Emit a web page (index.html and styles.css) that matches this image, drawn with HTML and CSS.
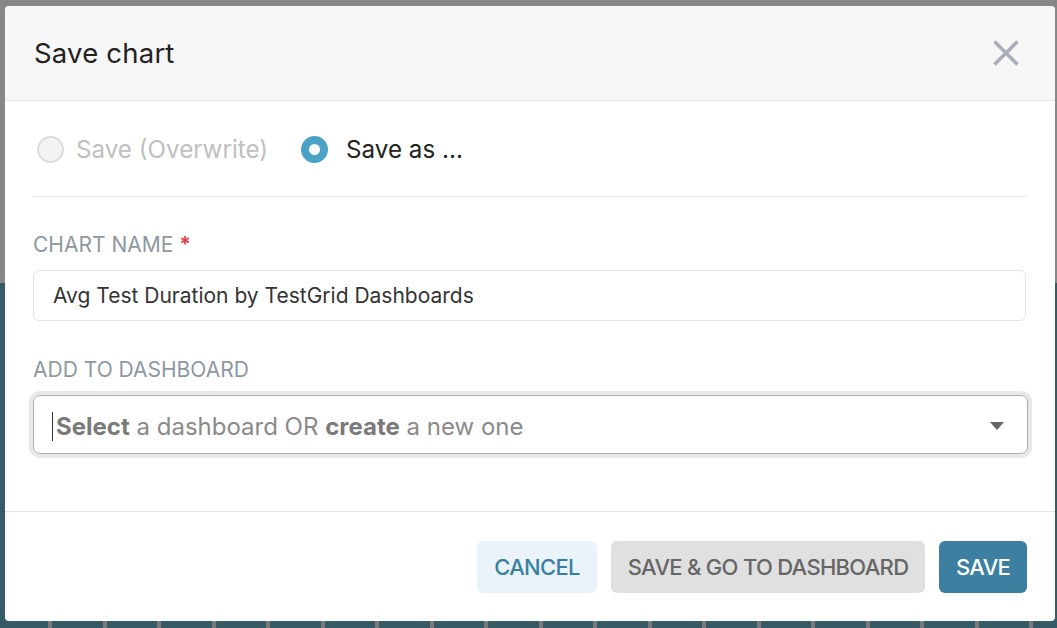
FILE: index.html
```html
<!DOCTYPE html>
<html>
<head>
<meta charset="utf-8">
<title>Save chart</title>
<link rel="stylesheet" href="styles.css">
</head>
<body>
<div class="page">
  <div class="page-top"></div>
  <div class="page-bottom"></div>
</div>
<div class="modal">
  <div class="modal-header">
    <h2 class="modal-title">Save chart</h2>
    <button class="close" aria-label="Close">
      <svg width="26" height="26" viewBox="0 0 26 26"><path d="M1.5 1.5 L24.5 24.5 M24.5 1.5 L1.5 24.5" stroke="#acadbc" stroke-width="3.6" fill="none"/></svg>
    </button>
  </div>
  <div class="modal-body">
    <div class="radio-row">
      <label class="radio disabled"><span class="dot"></span><span class="radio-text">Save (Overwrite)</span></label>
      <label class="radio checked"><span class="dot"></span><span class="radio-text">Save as ...</span></label>
    </div>
    <div class="divider"></div>
    <div class="field">
      <div class="field-label">CHART NAME <span class="req">*</span></div>
      <div class="input">Avg Test Duration by TestGrid Dashboards</div>
    </div>
    <div class="field field-2">
      <div class="field-label">ADD TO DASHBOARD</div>
      <div class="select">
        <span class="caret"></span>
        <span class="placeholder"><b>Select</b> a dashboard OR <b>create</b> a new one</span>
        <span class="arrow"></span>
      </div>
    </div>
  </div>
  <div class="modal-footer">
    <button class="btn btn-cancel">CANCEL</button>
    <button class="btn btn-secondary">SAVE &amp; GO TO DASHBOARD</button>
    <button class="btn btn-primary">SAVE</button>
  </div>
</div>
</body>
</html>
```
FILE: styles.css
```css
html, body {
  margin: 0;
  padding: 0;
  width: 1057px;
  height: 628px;
  overflow: hidden;
  font-family: Inter, "Noto Sans", sans-serif;
}

.page {
  display: flex;
  flex-direction: column;
  height: 628px;
  background: #878787;
}
.page-top {
  height: 283px;
  background: #878787;
}
.page-bottom {
  flex: 1;
  background-color: #365b67;
  background-image: repeating-linear-gradient(90deg, transparent 0 48px, #7a7a7a 48px 52px, transparent 52px 54.5px);
  background-size: 100% 7px;
  background-position: 0 100%;
  background-repeat: no-repeat;
}

.modal {
  position: absolute;
  left: 5px;
  top: 6px;
  width: 1050px;
  height: 615px;
  background: #fff;
  border-radius: 4px;
  display: flex;
  flex-direction: column;
  overflow: hidden;
}

.modal-header {
  height: 95px;
  box-sizing: border-box;
  background: #f7f7f7;
  border-bottom: 1px solid #e8e8e8;
  display: flex;
  align-items: center;
  justify-content: space-between;
  padding: 0 36px 0 29px;
}
.modal-title {
  margin: 0;
  font-size: 27.5px;
  font-weight: 400;
  color: #222;
  letter-spacing: 0.2px;
}
.close {
  border: 0;
  background: none;
  padding: 0;
  width: 26px;
  height: 26px;
  display: flex;
}

.modal-body {
  padding: 24px 29px 0 28px;
  flex: 1;
}

.radio-row {
  height: 48px;
  display: flex;
  align-items: center;
}
.radio {
  display: flex;
  align-items: center;
  font-size: 24.2px;
}
.radio .dot {
  width: 27px;
  height: 27px;
  border-radius: 50%;
  box-sizing: border-box;
  display: inline-block;
}
.radio.disabled {
  margin-left: 4px;
  color: #bfbfbf;
}
.radio.disabled .dot {
  border: 2px solid #dcdcdc;
  background: #f3f3f3;
  margin-right: 12px;
}
.radio.checked {
  margin-left: 33px;
  color: #222;
}
.radio.checked .dot {
  border: 8.5px solid #4aa3c7;
  background: #fff;
  margin-right: 18px;
}

.divider {
  height: 1px;
  background: #e3e3e3;
  margin-top: 23px;
}

.field {
  margin-top: 36px;
}
.field-2 {
  margin-top: 37px;
}
.field-label {
  font-size: 21px;
  line-height: 24px;
  color: #8e98a1;
  margin-bottom: 13px;
}
.req {
  color: #e04355;
  font-weight: 700;
}
.input {
  height: 51px;
  box-sizing: border-box;
  border: 1px solid #e3e3e3;
  border-radius: 6px;
  display: flex;
  align-items: center;
  padding-left: 19px;
  font-size: 21px;
  color: #333;
}
.select {
  height: 59px;
  margin-right: -2px;
  box-sizing: border-box;
  border: 1px solid #adadad;
  border-radius: 7px;
  box-shadow: 0 0 0 4px #e8e8e8;
  display: flex;
  align-items: center;
  padding: 3px 23px 0 18px;
  font-size: 24px;
  color: #8a8a8a;
}
.caret {
  width: 1px;
  height: 29px;
  background: #333;
  margin-right: 3px;
}
.placeholder b {
  font-weight: 700;
  color: #7a7a7a;
}
.placeholder {
  flex: 1;
}
.arrow {
  width: 0;
  height: 0;
  border-left: 7px solid transparent;
  border-right: 7px solid transparent;
  border-top: 8px solid #666;
}

.modal-footer {
  border-top: 1px solid #e3e3e3;
  height: 110px;
  box-sizing: border-box;
  display: flex;
  justify-content: flex-end;
  align-items: flex-start;
  padding: 29px 28px 0 0;
  gap: 14px;
}
.btn {
  height: 52px;
  border: 0;
  border-radius: 6px;
  font-family: Inter, "Noto Sans", sans-serif;
  font-size: 22px;
  font-weight: 500;
  letter-spacing: -0.7px;
  padding: 0 10px;
}
.btn-cancel {
  background: #e9f3f9;
  color: #3a7fa0;
  width: 120px;
}
.btn-secondary {
  background: #e0e0e0;
  color: #666;
  width: 314px;
}
.btn-primary {
  background: #3d7fa0;
  color: #fff;
  width: 88px;
}
```
